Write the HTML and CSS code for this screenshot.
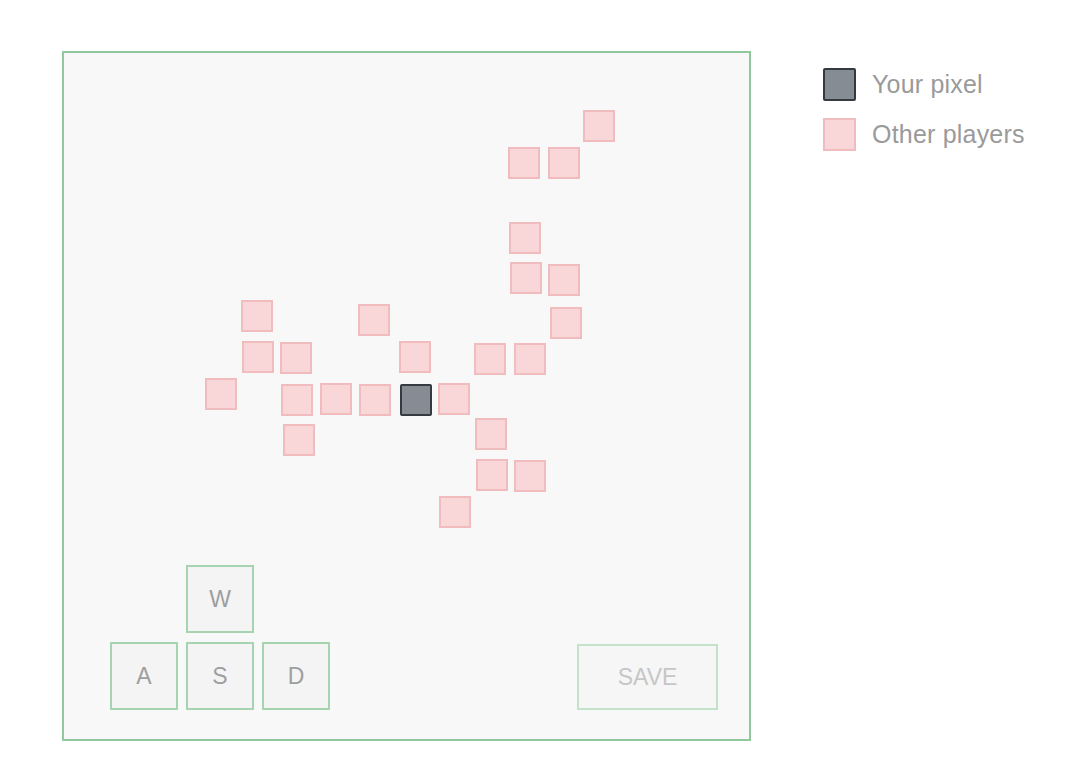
FILE: index.html
```html
<!DOCTYPE html>
<html>
<head>
<meta charset="utf-8">
<link rel="stylesheet" href="styles.css">
</head>
<body>
<div class="page">
  <div class="board">
    <div class="canvas">
      <div class="px other" style="left:519px;top:57px"></div>
      <div class="px other" style="left:444px;top:94px"></div>
      <div class="px other" style="left:484px;top:94px"></div>
      <div class="px other" style="left:445px;top:169px"></div>
      <div class="px other" style="left:446px;top:209px"></div>
      <div class="px other" style="left:484px;top:211px"></div>
      <div class="px other" style="left:486px;top:254px"></div>
      <div class="px other" style="left:177px;top:247px"></div>
      <div class="px other" style="left:294px;top:251px"></div>
      <div class="px other" style="left:178px;top:288px"></div>
      <div class="px other" style="left:216px;top:289px"></div>
      <div class="px other" style="left:335px;top:288px"></div>
      <div class="px other" style="left:410px;top:290px"></div>
      <div class="px other" style="left:450px;top:290px"></div>
      <div class="px other" style="left:141px;top:325px"></div>
      <div class="px other" style="left:217px;top:331px"></div>
      <div class="px other" style="left:256px;top:330px"></div>
      <div class="px other" style="left:295px;top:331px"></div>
      <div class="px mine" style="left:336px;top:331px"></div>
      <div class="px other" style="left:374px;top:330px"></div>
      <div class="px other" style="left:219px;top:371px"></div>
      <div class="px other" style="left:411px;top:365px"></div>
      <div class="px other" style="left:412px;top:406px"></div>
      <div class="px other" style="left:450px;top:407px"></div>
      <div class="px other" style="left:375px;top:443px"></div>
    </div>
    <div class="controls">
      <div class="keys">
        <button class="key key-w">W</button>
        <button class="key key-a">A</button>
        <button class="key key-s">S</button>
        <button class="key key-d">D</button>
      </div>
      <button class="save" disabled>SAVE</button>
    </div>
  </div>
  <div class="legend">
    <div class="legend-item"><span class="swatch mine"></span><span class="legend-label">Your pixel</span></div>
    <div class="legend-item"><span class="swatch other"></span><span class="legend-label">Other players</span></div>
  </div>
</div>
</body>
</html>
```

FILE: styles.css
```css
html, body {
  margin: 0;
  padding: 0;
  background: #ffffff;
  font-family: "Liberation Sans", Arial, Helvetica, sans-serif;
}

.page {
  display: flex;
  align-items: flex-start;
  gap: 72px;
  padding: 51px 0 0 62px;
}

.board {
  position: relative;
  box-sizing: border-box;
  width: 689px;
  height: 690px;
  border: 2px solid #90c99d;
  background: #f8f8f8;
  display: flex;
  flex-direction: column;
  justify-content: flex-end;
  padding: 0 31px 29px 46px;
}

.canvas {
  position: absolute;
  inset: 0;
}

.px {
  position: absolute;
  box-sizing: border-box;
  width: 32px;
  height: 32px;
}

.other {
  background: #f9d7d8;
  border: 2px solid #f1bcbd;
}

.mine {
  background: #868c93;
  border: 2px solid #343a40;
  border-radius: 2px;
}

.controls {
  position: relative;
  display: flex;
  justify-content: space-between;
  align-items: flex-end;
}

.keys {
  display: grid;
  grid-template-columns: 68px 68px 68px;
  grid-template-rows: 68px 68px;
  column-gap: 8px;
  row-gap: 9px;
}

.key-w { grid-column: 2; grid-row: 1; }
.key-a { grid-column: 1; grid-row: 2; }
.key-s { grid-column: 2; grid-row: 2; }
.key-d { grid-column: 3; grid-row: 2; }

.key, .save {
  box-sizing: border-box;
  margin: 0;
  font-family: "Liberation Sans", Arial, Helvetica, sans-serif;
  font-size: 23px;
  background: #f4f4f4;
  border: 2px solid #a6d4b1;
  padding: 0;
}

.key {
  width: 68px;
  height: 68px;
  color: #9e9e9e;
}

.save {
  width: 141px;
  height: 66px;
  color: #c6c6c6;
  border-color: #c2e3c9;
  background: #f6f6f6;
}

.legend {
  display: flex;
  flex-direction: column;
  gap: 17px;
  padding-top: 17px;
}

.legend-item {
  display: flex;
  align-items: center;
  gap: 16px;
}

.swatch {
  box-sizing: border-box;
  width: 33px;
  height: 33px;
}

.legend-label {
  font-size: 25px;
  letter-spacing: 0.2px;
  color: #9a9a9a;
}
```
